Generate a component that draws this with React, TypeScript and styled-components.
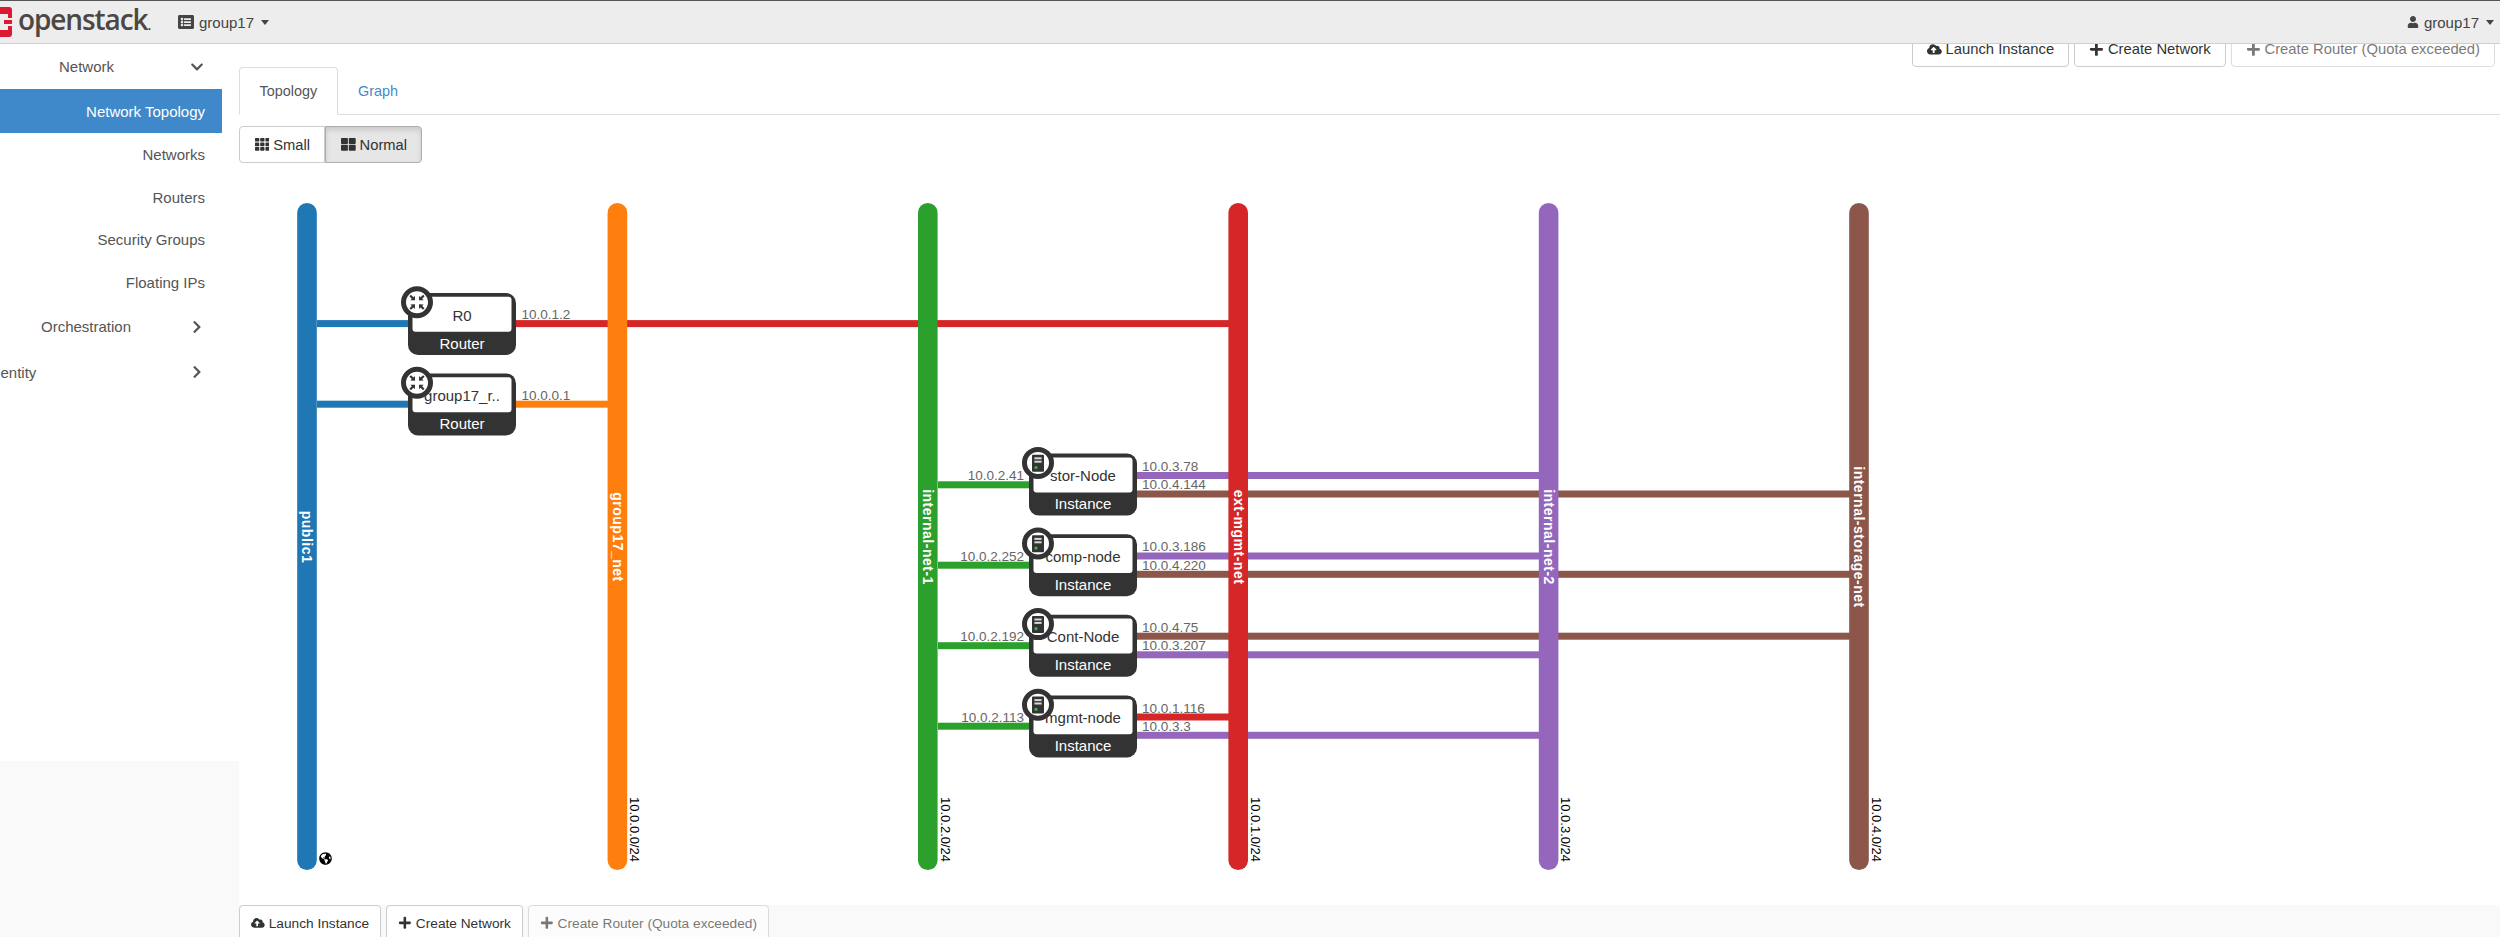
import React from 'react';
import styled, { createGlobalStyle } from 'styled-components';
import {
  FaChevronDown,
  FaChevronRight,
  FaCloudUploadAlt,
  FaGlobeAmericas,
  FaListAlt,
  FaPlus,
  FaTh,
  FaThLarge,
  FaUser,
} from 'react-icons/fa';

const COLORS = {
  BLUE: '#1f77b4',
  ORANGE: '#ff7f0e',
  GREEN: '#2ca02c',
  RED: '#d62728',
  PURPLE: '#9467bd',
  BROWN: '#8c564b',
  DARK: '#333333',
};

const NETWORK_TOP = 203;
const NETWORK_HEIGHT = 667;

const NETWORKS = [
  { name: 'public1', subnet: '', x: 297.2, color: COLORS.BLUE },
  { name: 'group17_net', subnet: '10.0.0.0/24', x: 607.6, color: COLORS.ORANGE },
  { name: 'internal-net-1', subnet: '10.0.2.0/24', x: 918, color: COLORS.GREEN },
  { name: 'ext-mgmt-net', subnet: '10.0.1.0/24', x: 1228.4, color: COLORS.RED },
  { name: 'internal-net-2', subnet: '10.0.3.0/24', x: 1538.8, color: COLORS.PURPLE },
  { name: 'internal-storage-net', subnet: '10.0.4.0/24', x: 1849.2, color: COLORS.BROWN },
];

// from / to are the x ends of a link, y its middle
const LINKS = [
  { y: 323.6, from: 317, to: 408, color: COLORS.BLUE },
  { y: 323.6, from: 516, to: 1229, color: COLORS.RED },
  { y: 404.2, from: 317, to: 408, color: COLORS.BLUE },
  { y: 404.2, from: 516, to: 608, color: COLORS.ORANGE },
  { y: 484.8, from: 938, to: 1029, color: COLORS.GREEN },
  { y: 475.5, from: 1137, to: 1539, color: COLORS.PURPLE },
  { y: 494, from: 1137, to: 1850, color: COLORS.BROWN },
  { y: 565.2, from: 938, to: 1029, color: COLORS.GREEN },
  { y: 556, from: 1137, to: 1539, color: COLORS.PURPLE },
  { y: 574.3, from: 1137, to: 1850, color: COLORS.BROWN },
  { y: 645.7, from: 938, to: 1029, color: COLORS.GREEN },
  { y: 636.2, from: 1137, to: 1850, color: COLORS.BROWN },
  { y: 654.8, from: 1137, to: 1539, color: COLORS.PURPLE },
  { y: 726.2, from: 938, to: 1029, color: COLORS.GREEN },
  { y: 717, from: 1137, to: 1229, color: COLORS.RED },
  { y: 735.3, from: 1137, to: 1539, color: COLORS.PURPLE },
];

const LINK_LABELS = [
  { text: '10.0.1.2', x: 521.5, y: 319, end: false },
  { text: '10.0.0.1', x: 521.5, y: 400, end: false },
  { text: '10.0.2.41', x: 1024, y: 480, end: true },
  { text: '10.0.3.78', x: 1142, y: 470.5, end: false },
  { text: '10.0.4.144', x: 1142, y: 489, end: false },
  { text: '10.0.2.252', x: 1024, y: 561, end: true },
  { text: '10.0.3.186', x: 1142, y: 551, end: false },
  { text: '10.0.4.220', x: 1142, y: 570, end: false },
  { text: '10.0.2.192', x: 1024, y: 641, end: true },
  { text: '10.0.4.75', x: 1142, y: 632, end: false },
  { text: '10.0.3.207', x: 1142, y: 650, end: false },
  { text: '10.0.2.113', x: 1024, y: 722, end: true },
  { text: '10.0.1.116', x: 1142, y: 713, end: false },
  { text: '10.0.3.3', x: 1142, y: 731, end: false },
];

const NODES = [
  { name: 'R0', kind: 'Router', x: 408, y: 293 },
  { name: 'group17_r..', kind: 'Router', x: 408, y: 373.4 },
  { name: 'stor-Node', kind: 'Instance', x: 1029, y: 453.6 },
  { name: 'comp-node', kind: 'Instance', x: 1029, y: 534.2 },
  { name: 'Cont-Node', kind: 'Instance', x: 1029, y: 614.8 },
  { name: 'mgmt-node', kind: 'Instance', x: 1029, y: 695.4 },
];

const GlobalStyle = createGlobalStyle`
  html, body {
    margin: 0;
    padding: 0;
    height: 937px;
    overflow: hidden;
    background: #f9f9f9;
  }
  body {
    font-family: "Liberation Sans", Arial, sans-serif;
    font-size: 15px;
    color: #333;
  }
`;

const RouterGlyph = () => (
  <g fill={COLORS.DARK}>
    {[45, 135, 225, 315].map((angle) => (
      <path key={angle} transform={`rotate(${angle})`} d="M0 -2.8 L3.2 -6.2 L1.1 -6.2 L1.1 -9.6 L-1.1 -9.6 L-1.1 -6.2 L-3.2 -6.2 Z" />
    ))}
  </g>
);

const InstanceGlyph = () => (
  <g>
    <rect x={-6} y={-8.2} width={12} height={17} rx={1} fill={COLORS.DARK} />
    <rect x={-3.6} y={-5.6} width={7.2} height={2} fill="#d8d8d8" />
    <rect x={-3.6} y={-2.2} width={7.2} height={2} fill="#d8d8d8" />
    <circle cx={-2} cy={4.6} r={1.6} fill="#3ab54a" />
  </g>
);

const Topology = () => (
  <Diagram viewBox="239 170 2261 733" width={2261} height={733}>
    {LINKS.map((link) => (
      <rect
        key={`${link.y}-${link.from}`}
        x={link.from}
        y={link.y - 3.5}
        width={link.to - link.from}
        height={7}
        fill={link.color}
      />
    ))}
    {LINK_LABELS.map((label) => (
      <LinkLabel key={label.text} x={label.x} y={label.y} $end={label.end}>
        {label.text}
      </LinkLabel>
    ))}
    {NETWORKS.map((net) => (
      <g key={net.name}>
        <rect x={net.x} y={NETWORK_TOP} width={19.6} height={NETWORK_HEIGHT} rx={9.8} fill={net.color} />
        <NetworkName transform={`translate(${net.x + 5.2} 537) rotate(90)`}>{net.name}</NetworkName>
        {net.subnet && (
          <SubnetLabel transform={`translate(${net.x + 22.5} 797) rotate(90)`}>{net.subnet}</SubnetLabel>
        )}
      </g>
    ))}
    {NODES.map((node) => (
      <g key={node.name} transform={`translate(${node.x} ${node.y})`}>
        <rect width={108} height={62} rx={10} fill={COLORS.DARK} />
        <rect x={4.5} y={3.8} width={99} height={35} rx={3} fill="#fff" />
        <NodeName x={54} y={27.5}>
          {node.name}
        </NodeName>
        <NodeKind x={54} y={55.5}>
          {node.kind}
        </NodeKind>
        <g transform="translate(9 9.3)">
          <circle r={13.5} fill="#fff" stroke={COLORS.DARK} strokeWidth={5} />
          {node.kind === 'Router' ? <RouterGlyph /> : <InstanceGlyph />}
        </g>
      </g>
    ))}
    <foreignObject x={319} y={852} width={14} height={14}>
      <Globe>
        <FaGlobeAmericas />
      </Globe>
    </foreignObject>
  </Diagram>
);

const ActionButtons = ({ small }: { small?: boolean }) => (
  <>
    <ActionButton $small={small}>
      <FaCloudUploadAlt /> Launch Instance
    </ActionButton>
    <ActionButton $small={small}>
      <FaPlus /> Create Network
    </ActionButton>
    <ActionButton $small={small} $disabled>
      <FaPlus /> Create Router (Quota exceeded)
    </ActionButton>
  </>
);

const App = () => {
  return (
    <Page>
      <GlobalStyle />
      <Header>
        <Brand>
          <BrandMark viewBox="0 0 12 30">
            <path d="M0 0 H9 Q12 0 12 3 V27 Q12 30 9 30 H0 Z" fill="#da1a32" />
            <rect x={0} y={7} width={8} height={16} fill="#ededed" />
            <rect x={8} y={11} width={4} height={8} fill="#ededed" />
            <rect x={4} y={13} width={8} height={4} fill="#da1a32" />
          </BrandMark>
          <BrandText>
            openstack<BrandDot>.</BrandDot>
          </BrandText>
        </Brand>
        <ProjectMenu>
          <FaListAlt /> group17 <Caret />
        </ProjectMenu>
        <UserMenu>
          <FaUser /> group17 <Caret />
        </UserMenu>
      </Header>
      <Body>
        <Sidebar>
          <GroupRow>
            <GroupLabel $left={59}>Network</GroupLabel>
            <ChevronSlot>
              <FaChevronDown />
            </ChevronSlot>
          </GroupRow>
          <NavItem $active>Network Topology</NavItem>
          <NavItem>Networks</NavItem>
          <NavItem>Routers</NavItem>
          <NavItem>Security Groups</NavItem>
          <NavItem>Floating IPs</NavItem>
          <GroupRow $tall>
            <GroupLabel $left={41}>Orchestration</GroupLabel>
            <ChevronSlot>
              <FaChevronRight />
            </ChevronSlot>
          </GroupRow>
          <GroupRow>
            <GroupLabel $left={-12}>Identity</GroupLabel>
            <ChevronSlot>
              <FaChevronRight />
            </ChevronSlot>
          </GroupRow>
        </Sidebar>
        <Main>
          <Canvas>
            <TopActions>
              <ActionButtons />
            </TopActions>
            <Tabs>
              <Tab $active>Topology</Tab>
              <Tab>Graph</Tab>
            </Tabs>
            <SizeGroup>
              <SizeButton>
                <FaTh /> Small
              </SizeButton>
              <SizeButton $active>
                <FaThLarge /> Normal
              </SizeButton>
            </SizeGroup>
            <Topology />
          </Canvas>
          <BottomActions>
            <ActionButtons small />
          </BottomActions>
        </Main>
      </Body>
    </Page>
  );
};

export default App;

const Page = styled.div`
  width: 2500px;
  height: 937px;
  overflow: hidden;
  display: flex;
  flex-direction: column;
`;

const Header = styled.header`
  position: relative;
  z-index: 2;
  flex: none;
  display: flex;
  align-items: center;
  height: 44px;
  box-sizing: border-box;
  background: #ededed;
  border-top: 1px solid #555;
  border-bottom: 1px solid #cfcfcf;
  padding-right: 6px;
  font-size: 15px;
  color: #444;

  svg {
    flex: none;
  }
`;

const Brand = styled.div`
  display: flex;
  align-items: center;
  width: 178px;
  gap: 6px;
`;

const BrandMark = styled.svg`
  width: 12px;
  height: 30px;
`;

const BrandText = styled.span`
  font-family: "Open Sans", sans-serif;
  font-weight: 600;
  font-size: 28px;
  line-height: 30px;
  letter-spacing: -1.1px;
  color: #4c4744;
`;

const BrandDot = styled.span`
  font-size: 14px;
`;

const ProjectMenu = styled.div`
  display: flex;
  align-items: center;
  gap: 5px;

  svg:first-child {
    font-size: 16px;
  }
`;

const UserMenu = styled(ProjectMenu)`
  margin-left: auto;

  svg:first-child {
    font-size: 12px;
  }
`;

const Caret = styled.i`
  width: 0;
  height: 0;
  margin-left: 2px;
  border-top: 5px solid #444;
  border-left: 4.5px solid transparent;
  border-right: 4.5px solid transparent;
`;

const Body = styled.div`
  flex: 1;
  display: flex;
  align-items: flex-start;
  min-height: 0;
`;

const Sidebar = styled.nav`
  flex: none;
  width: 239px;
  height: 717px;
  overflow: hidden;
  background: #fff;
  color: #555;
`;

const GroupRow = styled.div<{ $tall?: boolean }>`
  display: flex;
  align-items: center;
  justify-content: space-between;
  width: 222px;
  height: ${({ $tall }) => ($tall ? 46 : 45)}px;
  box-sizing: border-box;
  padding-right: 18px;
`;

const GroupLabel = styled.span<{ $left: number }>`
  margin-left: ${({ $left }) => $left}px;
`;

const ChevronSlot = styled.span`
  display: flex;
  justify-content: center;
  width: 14px;
  font-size: 14px;
  color: #555;
`;

const NavItem = styled.div<{ $active?: boolean }>`
  display: flex;
  align-items: center;
  justify-content: flex-end;
  width: 222px;
  height: ${({ $active }) => ($active ? 44 : 42.7)}px;
  box-sizing: border-box;
  padding-right: 17px;
  background: ${({ $active }) => ($active ? '#3f88c9' : 'transparent')};
  color: ${({ $active }) => ($active ? '#fff' : '#555')};
`;

const Main = styled.main`
  flex: 1;
  min-width: 0;
  display: flex;
  flex-direction: column;
`;

const Canvas = styled.div`
  height: 861px;
  background: #fff;
  display: flex;
  flex-direction: column;
`;

const TopActions = styled.div`
  display: flex;
  justify-content: flex-end;
  gap: 5px;
  height: 36px;
  margin-top: -13px;
  padding-right: 5px;
`;

const BottomActions = styled.div`
  display: flex;
  gap: 5px;
`;

const ActionButton = styled.button<{ $small?: boolean; $disabled?: boolean }>`
  display: flex;
  align-items: center;
  justify-content: center;
  gap: 4px;
  height: 36px;
  padding: 0 ${({ $small }) => ($small ? 11 : 14)}px;
  background: #fff;
  border: 1px solid #ccc;
  border-radius: 4px;
  font-family: inherit;
  font-size: ${({ $small }) => ($small ? 13.7 : 14.8)}px;
  color: #333;
  white-space: nowrap;
  opacity: ${({ $disabled }) => ($disabled ? 0.65 : 1)};
`;

const Tabs = styled.div`
  flex: none;
  display: flex;
  height: 48px;
  box-sizing: border-box;
  border-bottom: 1px solid #ddd;
  font-size: 14.4px;
`;

const Tab = styled.div<{ $active?: boolean }>`
  display: flex;
  align-items: center;
  height: 48px;
  box-sizing: border-box;
  padding: 0 19.5px;
  border: 1px solid ${({ $active }) => ($active ? '#ddd' : 'transparent')};
  border-bottom-color: ${({ $active }) => ($active ? '#fff' : 'transparent')};
  border-radius: 4px 4px 0 0;
  background: ${({ $active }) => ($active ? '#fff' : 'transparent')};
  color: ${({ $active }) => ($active ? '#555' : '#428bca')};
`;

const SizeGroup = styled.div`
  flex: none;
  display: flex;
  align-self: flex-start;
  margin-top: 11px;
  font-size: 14.7px;
`;

const SizeButton = styled.div<{ $active?: boolean }>`
  display: flex;
  align-items: center;
  gap: 4px;
  height: 37px;
  box-sizing: border-box;
  padding: 0 14.5px;
  border: 1px solid ${({ $active }) => ($active ? '#adadad' : '#ccc')};
  border-radius: ${({ $active }) => ($active ? '0 4px 4px 0' : '4px 0 0 4px')};
  background: ${({ $active }) => ($active ? '#e6e6e6' : '#fff')};
  box-shadow: ${({ $active }) => ($active ? 'inset 0 3px 5px rgba(0, 0, 0, 0.125)' : 'none')};
  color: #333;
`;

const Diagram = styled.svg`
  flex: none;
  display: block;
  margin-top: 7px;
`;

const LinkLabel = styled.text<{ $end: boolean }>`
  font-size: 13.5px;
  fill: #666;
  text-anchor: ${({ $end }) => ($end ? 'end' : 'start')};
`;

const NetworkName = styled.text`
  font-size: 14px;
  font-weight: 700;
  letter-spacing: 0.5px;
  fill: #fff;
  text-anchor: middle;
`;

const SubnetLabel = styled.text`
  font-size: 13px;
  fill: #000;
`;

const NodeName = styled.text`
  font-size: 15px;
  fill: #333;
  text-anchor: middle;
`;

const NodeKind = styled.text`
  font-size: 15px;
  fill: #fff;
  text-anchor: middle;
`;

const Globe = styled.div`
  font-size: 13px;
  line-height: 0;
  color: #000;
`;
